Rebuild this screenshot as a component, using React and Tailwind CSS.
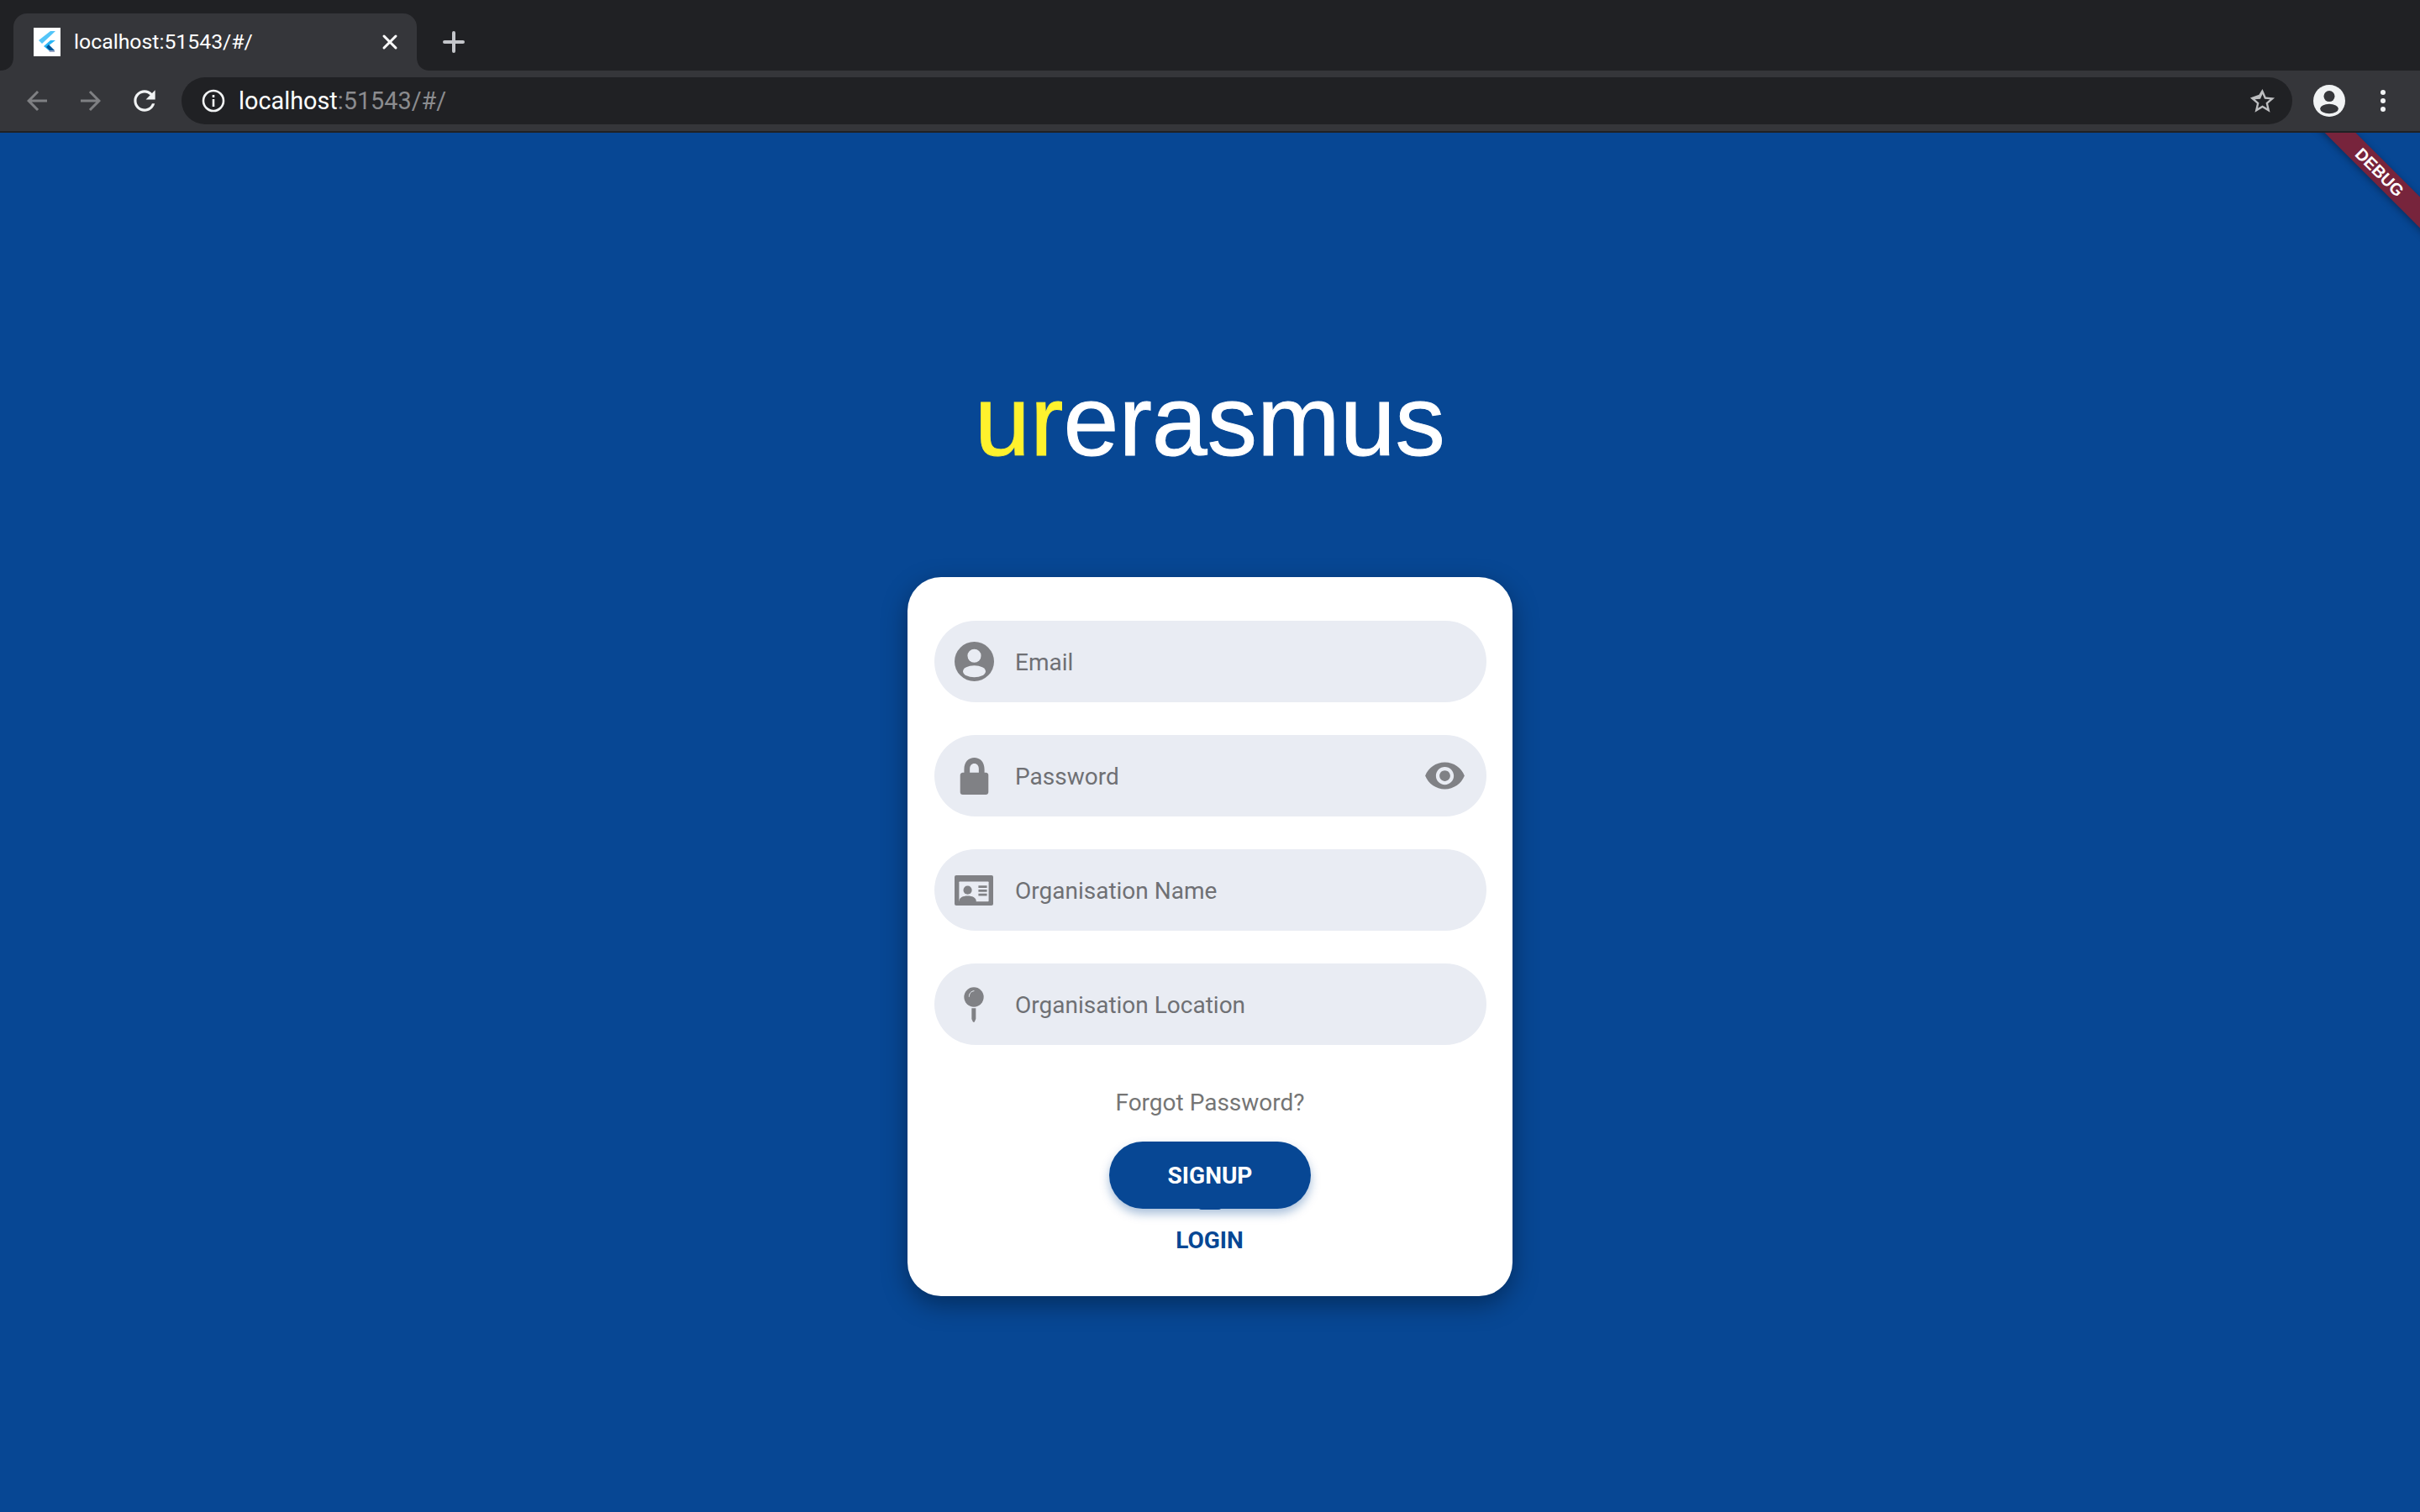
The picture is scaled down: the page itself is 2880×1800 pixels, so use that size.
import React from 'react';

const FlutterIcon = () => (
  <svg width="32" height="34" viewBox="0 0 32 34" className="shrink-0">
    <rect width="32" height="34" fill="#fff" />
    <path d="M20 4h6L10 19l-4-4z" fill="#54c5f8" />
    <path d="M26 15h-6l-8 7 6 5 3-1-4-4z" fill="#29b6f6" />
    <path d="M15 23l3-3 7 7h-6z" fill="#01579b" />
    <path d="M18 27h7v2h-6z" fill="#9aa7c4" />
  </svg>
);

const MaterialIcon = ({ d, size, className }) => (
  <svg width={size} height={size} viewBox="0 0 24 24" className={className} fill="currentColor">
    <path d={d} />
  </svg>
);

const AccountIcon = ({ fg, bg, size }) => (
  <svg width={size} height={size} viewBox="0 0 140 140">
    <circle cx="70" cy="70" r="70" fill={fg} />
    <circle cx="70" cy="50" r="24" fill={bg} />
    <ellipse cx="70" cy="105" rx="40" ry="21" fill={bg} />
  </svg>
);

const LockIcon = () => (
  <svg width="47" height="47" viewBox="0 0 140 140" fill="#808185">
    <path fillRule="evenodd" d="M34 48C34 20 50 6 70 6s36 14 36 42v11h5c6 0 9 4 9 9v60c0 6-4 9-9 9H29c-6 0-9-4-9-9V68c0-5 4-9 9-9h5zM54 59h32V46c0-11-6-19-16-19s-16 8-16 19z" />
  </svg>
);

const IdCardIcon = () => (
  <svg width="46" height="36" viewBox="0 0 136 106">
    <rect width="136" height="106" rx="6" fill="#808185" />
    <rect x="16" y="22" width="104" height="70" rx="2" fill="#e9ecf3" />
    <circle cx="46" cy="52" r="15" fill="#808185" />
    <path d="M16 106V90c0-12 14-18 30-18s30 6 30 18v16z" fill="#808185" />
    <path d="M84 36h30v8H84zM84 50h30v8H84zM84 64h30v8H84z" fill="#808185" />
  </svg>
);

const PinIcon = () => (
  <svg width="24" height="42" viewBox="0 0 72 126">
    <circle cx="36" cy="36" r="35" fill="#808185" />
    <path d="M19 34c0-11 7-19 17-20" fill="none" stroke="#e9ecf3" strokeWidth="3" strokeLinecap="round" />
    <path d="M28 76h15v38l-5 11h-5l-5-11z" fill="#808185" />
  </svg>
);

const Field = ({ icon, label, trailing }) => (
  <div className="flex h-[97px] items-center rounded-full bg-[#e9ecf3]">
    <div className="flex w-[96px] shrink-0 items-center justify-center pr-[2px]">{icon}</div>
    <span className="pt-[2px] text-[28px] text-[#6f7074]">{label}</span>
    {trailing && <div className="ml-auto mr-[24px] flex text-[#808185]">{trailing}</div>}
  </div>
);

export default function App() {
  return (
    <div className="flex h-[1800px] w-[2880px] flex-col overflow-hidden bg-[#074794] font-['Roboto',sans-serif]">
      {/* Tab strip */}
      <div className="flex h-[84px] shrink-0 items-end bg-[#202124] pl-[16px]">
        <div className="relative flex h-[68px] w-[480px] items-center rounded-t-[16px] bg-[#35363a] pl-[24px] pr-[22px]">
          <svg width="16" height="16" viewBox="0 0 16 16" className="absolute bottom-0 left-[-16px]">
            <path d="M16 0v16H0C10 16 16 10 16 0z" fill="#35363a" />
          </svg>
          <svg width="16" height="16" viewBox="0 0 16 16" className="absolute bottom-0 right-[-16px]">
            <path d="M0 0v16h16C6 16 0 10 0 0z" fill="#35363a" />
          </svg>
          <FlutterIcon />
          <span className="ml-[16px] text-[24.8px] text-white">localhost:51543/#/</span>
          <svg width="20" height="20" viewBox="0 0 20 20" className="ml-auto" stroke="#fff" strokeWidth="3" strokeLinecap="round">
            <path d="M3 3l14 14M17 3L3 17" />
          </svg>
        </div>
        <svg width="28" height="28" viewBox="0 0 28 28" className="mb-[20px] ml-[30px]" stroke="#c4c6ca" strokeWidth="4" strokeLinecap="round">
          <path d="M14 3v22M3 14h22" />
        </svg>
      </div>

      {/* Toolbar */}
      <div className="flex h-[74px] shrink-0 items-center border-b-2 border-[#202124] bg-[#35363a]">
        <div className="flex w-[216px] shrink-0 items-center pl-[26px] text-[#7f8083]">
          <MaterialIcon size={36} d="M20 11H7.83l5.59-5.59L12 4l-8 8 8 8 1.41-1.41L7.83 13H20v-2z" />
          <MaterialIcon size={36} className="ml-[28px] rotate-180" d="M20 11H7.83l5.59-5.59L12 4l-8 8 8 8 1.41-1.41L7.83 13H20v-2z" />
          <MaterialIcon size={38} className="ml-[27px] text-[#f1f3f4]" d="M17.65 6.35C16.2 4.9 14.21 4 12 4c-4.42 0-7.99 3.58-7.99 8s3.57 8 7.99 8c3.73 0 6.84-2.55 7.73-6h-2.08c-.82 2.33-3.04 4-5.65 4-3.31 0-6-2.69-6-6s2.69-6 6-6c1.66 0 3.14.69 4.22 1.78L13 11h7V4l-2.35 2.35z" />
        </div>
        <div className="flex h-[56px] flex-1 items-center rounded-full bg-[#202124] pl-[24px] pr-[18px]">
          <svg width="28" height="28" viewBox="0 0 28 28" fill="none" stroke="#f1f3f4" strokeWidth="2.6">
            <circle cx="14" cy="14" r="12" />
            <path d="M14 12v9M14 7v3" />
          </svg>
          <span className="ml-[16px] pt-[1px] text-[28.8px] text-white">localhost<span className="text-[#8b8c8f]">:51543/#/</span></span>
          <MaterialIcon size={35} className="ml-auto text-[#bdbec0]" d="M22 9.24l-7.19-.62L12 2 9.19 6.63 2 9.24l5.46 4.73L5.82 21 12 17.27 18.18 21l-1.63-7.03L22 9.24zM12 15.4l-3.76 2.27 1-4.28-3.32-2.88 4.38-.38L12 6.1l1.71 4.04 4.38.38-3.32 2.88 1 4.28L12 15.4z" />
        </div>
        <div className="flex w-[152px] shrink-0 items-center pl-[25px]">
          <AccountIcon size={38} fg="#f1f3f4" bg="#35363a" />
          <div className="ml-[42px] flex flex-col gap-[4px]">
            <div className="size-[6px] rounded-full bg-[#f1f3f4]" />
            <div className="size-[6px] rounded-full bg-[#f1f3f4]" />
            <div className="size-[6px] rounded-full bg-[#f1f3f4]" />
          </div>
        </div>
      </div>

      {/* Page */}
      <div className="relative flex flex-1 flex-col items-center overflow-hidden">
        <div className="absolute right-[-102px] top-[34px] flex h-[26px] w-[300px] rotate-45 items-center justify-center bg-[#77243c] text-[20px] font-bold leading-none text-white shadow-[0_2px_8px_rgba(0,0,0,0.35)] font-['Liberation_Sans',sans-serif]">
          DEBUG
        </div>

        <h1 className="mt-[275px] text-[118.5px] font-normal leading-[136px] text-white [-webkit-text-stroke:1px_currentColor] font-['Liberation_Sans',sans-serif]">
          <span className="text-[#fff22d]">ur</span>erasmus
        </h1>

        <div className="mt-[118px] flex h-[856px] w-[720px] flex-col rounded-[40px] bg-white pl-[32px] pr-[31px] pt-[52px] shadow-[0_10px_30px_rgba(0,0,0,0.36)]">
          <div className="flex flex-col gap-[39px]">
            <Field icon={<AccountIcon size={47} fg="#808185" bg="#e9ecf3" />} label="Email" />
            <Field
              icon={<LockIcon />}
              label="Password"
              trailing={<MaterialIcon size={51} d="M12 4.5C7 4.5 2.73 7.61 1 12c1.73 4.39 6 7.5 11 7.5s9.27-3.11 11-7.5c-1.73-4.39-6-7.5-11-7.5zM12 17c-2.76 0-5-2.24-5-5s2.24-5 5-5 5 2.24 5 5-2.24 5-5 5zm0-8c-1.66 0-3 1.34-3 3s1.34 3 3 3 3-1.34 3-3-1.34-3-3-3z" />}
            />
            <Field icon={<IdCardIcon />} label="Organisation Name" />
            <Field icon={<PinIcon />} label="Organisation Location" />
          </div>
          <div className="mt-[51px] pr-[1px] text-center text-[28px] leading-[36px] text-[#757575]">Forgot Password?</div>
          <button className="relative ml-[208px] mt-[28px] flex h-[80px] w-[240px] items-center justify-center rounded-full bg-[#074794] pt-[2px] text-[28px] font-bold text-white shadow-[0_6px_12px_rgba(6,71,149,0.35)]">
            SIGNUP
            <span className="absolute bottom-[-1px] left-[106px] h-[4px] w-[28px] rounded-b-[14px] bg-[#074794]" />
          </button>
          <div className="mt-[21px] pr-[2px] text-center text-[28px] font-bold leading-[34px] text-[#074794]">LOGIN</div>
        </div>
      </div>
    </div>
  );
}
